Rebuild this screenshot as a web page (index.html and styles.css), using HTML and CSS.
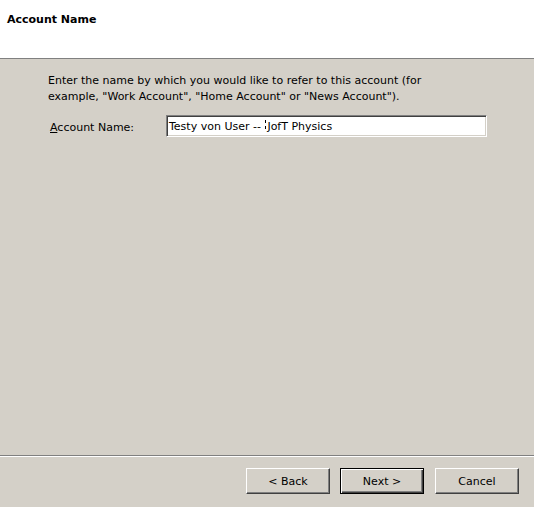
FILE: index.html
```html
<!DOCTYPE html>
<html>
<head>
<meta charset="utf-8">
<link rel="stylesheet" href="styles.css">
</head>
<body>
<div class="wizard">
  <div class="header">
    <div class="title">Account Name</div>
  </div>
  <div class="main">
    <p class="intro">Enter the name by which you would like to refer to this account (for<br>example, "Work Account", "Home Account" or "News Account").</p>
    <div class="field">
      <label class="label"><u>A</u>ccount Name:</label>
      <div class="textbox"><span class="value">Testy von User -- <span class="caret-wrap"><span class="caret"></span></span>JofT Physics</span></div>
    </div>
  </div>
  <div class="footer">
    <button class="btn">&lt; Back</button>
    <button class="btn default">Next &gt;</button>
    <button class="btn cancel">Cancel</button>
  </div>
</div>
</body>
</html>
```
FILE: styles.css
```css
html, body {
  margin: 0;
  padding: 0;
}
body {
  background: #d4d0c8;
  font-family: "DejaVu Sans", Verdana, sans-serif;
  font-size: 11px;
  color: #000;
}
.wizard {
  display: flex;
  flex-direction: column;
  height: 507px;
}
.header {
  height: 58px;
  background: #fff;
  border-bottom: 1px solid #808080;
  box-sizing: content-box;
}
.title {
  font-weight: bold;
  padding: 13px 0 0 7px;
  line-height: 13px;
}
.main {
  flex: 1;
  padding: 14px 0 0 48px;
  border-bottom: 1px solid #808080;
  box-shadow: 0 1px 0 #fff;
}
.intro {
  margin: 0;
  line-height: 16px;
}
.field {
  display: flex;
  align-items: center;
  margin-top: 10px;
}
.label {
  width: 116px;
  padding-left: 2px;
  position: relative;
  top: 1px;
}
.textbox {
  width: 317px;
  height: 20px;
  background: #fff;
  border-top: 1px solid #808080;
  border-left: 1px solid #808080;
  border-right: 1px solid #fff;
  border-bottom: 1px solid #fff;
  box-shadow: inset 1px 1px 0 #404040, inset -1px -1px 0 #d4d0c8;
  display: flex;
  align-items: center;
  padding-left: 2px;
}
.caret-wrap {
  position: relative;
  display: inline-block;
  width: 0;
  margin: 0 2px 0 1px;
}
.caret {
  position: absolute;
  left: 0;
  top: -10px;
  width: 1px;
  height: 9px;
  border-left: 1px dashed #000;
}
.footer {
  height: 50px;
  margin-top: 1px;
  display: flex;
  justify-content: flex-end;
  align-items: flex-start;
  padding: 11px 15px 0 0;
  box-sizing: border-box;
  gap: 10px;
}
.btn {
  width: 84px;
  height: 26px;
  margin: 0;
  padding: 0;
  font-family: "DejaVu Sans", Verdana, sans-serif;
  font-size: 11px;
  color: #000;
  background: #d4d0c8;
  border-top: 1px solid #fff;
  border-left: 1px solid #fff;
  border-right: 1px solid #404040;
  border-bottom: 1px solid #404040;
  box-shadow: inset -1px -1px 0 #808080;
}
.btn.default {
  border: 1px solid #000;
  box-shadow: inset 1px 1px 0 #fff, inset -1px -1px 0 #404040, inset -2px -2px 0 #808080;
}
.btn.cancel {
  margin-left: 1px;
}
```
